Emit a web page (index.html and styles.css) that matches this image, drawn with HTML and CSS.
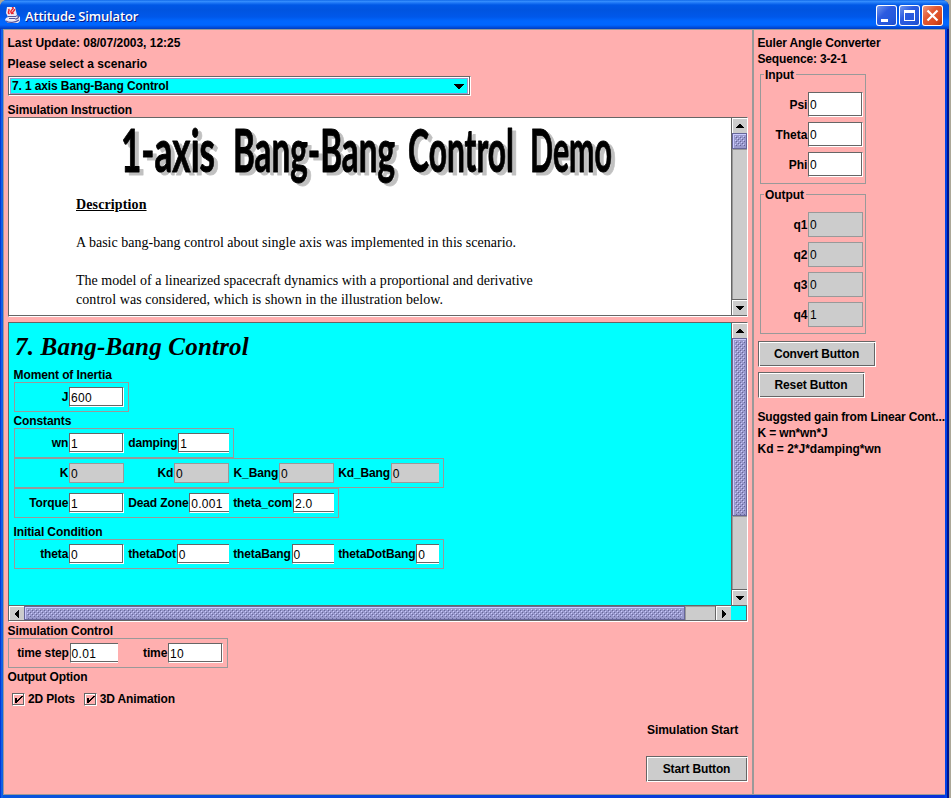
FILE: index.html
```html
<!DOCTYPE html>
<html lang="en">
<head>
<meta charset="utf-8">
<title>Attitude Simulator</title>
<link rel="stylesheet" href="styles.css">
</head>
<body>
<div class="window">
  <header class="titlebar">
    <svg class="java" width="16" height="17" viewBox="0 0 16 17">
      <path d="M2 0h8l1 4 1 4 3 2v4l-2 2H3l-3-3 1-2 2-1-2-4z" fill="#eceaf6"/>
      <path d="M7 0c4 2-4 3 0 7M9.500 2c1 2-4 3-1 5M3.500 2c2 2-2 3 1 5" fill="none" stroke="#e8262e" stroke-width="1.500"/>
      <path d="M3 9.500h8M4 11.500h6M11 9c4-1 3 3-1 3M1 14c3 2 9 2 13-1" fill="none" stroke="#55559c" stroke-width="1.200"/>
    </svg>
    <h1 class="caption">Attitude Simulator</h1>
    <div class="winbtns">
      <span class="winbtn"><svg width="21" height="21"><path d="M5 14h7v3H5z" fill="#fff"/></svg></span>
      <span class="winbtn"><svg width="21" height="21"><path d="M5 5h11v11H5zM6 8v7h9V8z" fill="#fff" fill-rule="evenodd"/></svg></span>
      <span class="winbtn close"><svg width="21" height="21"><path d="M5.500 5.500l10 10M15.500 5.500l-10 10" stroke="#fff" stroke-width="2.200"/></svg></span>
    </div>
  </header>
  <div class="client">
    <main class="left">
      <div class="label update">Last Update: 08/07/2003, 12:25</div>
      <div class="label">Please select a scenario</div>
      <div class="combo"><div class="combo-in"><span>7. 1 axis Bang-Bang Control</span><svg width="10" height="5"><path d="M0 0h10v1H9v1H8v1H7v1H6v1H4V4H3V3H2V2H1V1H0z"/></svg></div></div>
      <div class="label instr">Simulation Instruction</div>
      <div class="pane pane-doc">
        <div class="doc">
          <svg class="banner" width="520" height="72" viewBox="111 118 520 72">
            <g class="word">
              <text transform="translate(121 172) scale(1 1.400)" textLength="94" lengthAdjust="spacingAndGlyphs">1-axis</text>
              <text transform="translate(233 172) scale(1 1.400)" textLength="162" lengthAdjust="spacingAndGlyphs">Bang-Bang</text>
              <text transform="translate(408 172) scale(1 1.400)" textLength="106" lengthAdjust="spacingAndGlyphs">Control</text>
              <text transform="translate(530 172) scale(1 1.400)" textLength="82" lengthAdjust="spacingAndGlyphs">Demo</text>
            </g>
          </svg>
          <h2 class="desc">Description</h2>
          <p>A basic bang-bang control about single axis was implemented in this scenario.</p>
          <p>The model of a linearized spacecraft dynamics with a proportional and derivative<br><span>control was considered, which is shown in the illustration below.</span></p>
        </div>
        <div class="vbar">
          <span class="sbtn"><svg width="8" height="4"><path d="M3 0h2v1h1v1h1v1h1v1H0V3h1V2h1V1h1z"/></svg></span>
          <span class="thumb short"></span>
          <span class="track"></span>
          <span class="sbtn"><svg width="8" height="4"><path d="M0 0h8v1H7v1H6v1H5v1H3V3H2V2H1V1H0z"/></svg></span>
        </div>
      </div>
      <div class="pane pane-ctl">
        <div class="ctl">
          <h2 class="ctl-title">7. Bang-Bang Control</h2>
          <div class="label moment">Moment of Inertia</div>
          <div class="row"><div class="cell"><span>J</span><i class="field">600</i></div></div>
          <div class="label sep">Constants</div>
          <div class="row"><div class="cell"><span>wn</span><i class="field">1</i></div><div class="cell"><span>damping</span><i class="field">1</i></div></div>
          <div class="row"><div class="cell"><span>K</span><i class="field off">0</i></div><div class="cell"><span>Kd</span><i class="field off">0</i></div><div class="cell"><span>K_Bang</span><i class="field off">0</i></div><div class="cell"><span>Kd_Bang</span><i class="field off">0</i></div></div>
          <div class="row"><div class="cell"><span>Torque</span><i class="field">1</i></div><div class="cell"><span>Dead Zone</span><i class="field">0.001</i></div><div class="cell"><span>theta_com</span><i class="field">2.0</i></div></div>
          <div class="label init">Initial Condition</div>
          <div class="row"><div class="cell"><span>theta</span><i class="field">0</i></div><div class="cell"><span>thetaDot</span><i class="field">0</i></div><div class="cell"><span>thetaBang</span><i class="field">0</i></div><div class="cell"><span>thetaDotBang</span><i class="field">0</i></div></div>
        </div>
        <div class="vbar">
          <span class="sbtn"><svg width="8" height="4"><path d="M3 0h2v1h1v1h1v1h1v1H0V3h1V2h1V1h1z"/></svg></span>
          <span class="thumb tall"></span>
          <span class="track"></span>
          <span class="sbtn"><svg width="8" height="4"><path d="M0 0h8v1H7v1H6v1H5v1H3V3H2V2H1V1H0z"/></svg></span>
        </div>
        <div class="hbar">
          <span class="sbtn"><svg width="4" height="8"><path d="M4 0v8H3V7H2V6H1V5H0V3h1V2h1V1h1V0z"/></svg></span>
          <span class="thumb wide"></span>
          <span class="track"></span>
          <span class="sbtn"><svg width="4" height="8"><path d="M0 0v8h1V7h1V6h1V5h1V3H3V2H2V1H1V0z"/></svg></span>
        </div>
      </div>
      <div class="label simc">Simulation Control</div>
      <div class="row"><div class="cell"><span>time step</span><i class="field">0.01</i></div><div class="cell"><span>time</span><i class="field">10</i></div></div>
      <div class="label sep">Output Option</div>
      <div class="checks">
        <span class="check"><b class="box"><svg width="8" height="7"><path d="M0 2h2v2h1V3h1V2h1V1h1V0h2v1H7v1H6v1H5v1H4v1H3v1H2v1H0z"/></svg></b>2D Plots</span>
        <span class="check"><b class="box"><svg width="8" height="7"><path d="M0 2h2v2h1V3h1V2h1V1h1V0h2v1H7v1H6v1H5v1H4v1H3v1H2v1H0z"/></svg></b>3D Animation</span>
      </div>
      <div class="start">
        <div class="label">Simulation Start</div>
        <div class="btn startbtn">Start Button</div>
      </div>
    </main>
    <aside class="rightcol">
      <div class="label">Euler Angle Converter</div>
      <div class="label">Sequence: 3-2-1</div>
      <section class="group">
        <h3>Input</h3>
        <div class="pair"><span>Psi</span><i class="field">0</i></div>
        <div class="pair"><span>Theta</span><i class="field">0</i></div>
        <div class="pair"><span>Phi</span><i class="field">0</i></div>
      </section>
      <section class="group out">
        <h3>Output</h3>
        <div class="pair"><span>q1</span><i class="field off">0</i></div>
        <div class="pair"><span>q2</span><i class="field off">0</i></div>
        <div class="pair"><span>q3</span><i class="field off">0</i></div>
        <div class="pair"><span>q4</span><i class="field off">1</i></div>
      </section>
      <div class="btn convert">Convert Button</div>
      <div class="btn reset">Reset Button</div>
      <div class="label gain">Suggsted gain from Linear Cont...</div>
      <div class="label">K = wn*wn*J</div>
      <div class="label formula">Kd = 2*J*damping*wn</div>
    </aside>
  </div>
</div>
</body>
</html>
```
FILE: styles.css
```css
* { box-sizing: border-box; margin: 0; padding: 0; }
body { width: 951px; height: 798px; overflow: hidden; background: #aca899; font: bold 12px/16px "Liberation Sans", Arial, sans-serif; color: #000; }
svg { display: block; flex: none; }

/* Window frame and title bar */
.window { width: 949px; height: 798px; padding: 0 4px 3px 3px; border-radius: 7px 7px 0 0; background: linear-gradient(90deg, #0019cf 0, #0855dd 1px, #166aee 2px, #0855dd 3px, #0831d9 944px, #0042e8 945px, #0042e8 947px, #00138c 947px); display: flex; flex-direction: column; }
.titlebar { height: 29px; margin: 0 -4px 0 -3px; padding: 1px 6px 0 5px; border-radius: 7px 7px 0 0; display: flex; align-items: center; background: linear-gradient(#0058e0 0, #3a93ff 1px, #1c75f5 3px, #0058e6 5px, #0054e0 10px, #0058ea 17px, #0066fe 21px, #0066ff 25px, #0050e0 27px, #003dc0 29px); }
.caption { flex: 1; margin-left: 4px; padding-top: 2px; font: 600 13px/18px "Open Sans", sans-serif; letter-spacing: -.17px; color: #fff; text-shadow: 1px 1px #0a1883; }
.winbtns { display: flex; gap: 2px; padding-top: 1px; }
.winbtn { width: 21px; height: 21px; border-radius: 3px; box-shadow: inset 0 0 0 1px #fff; background: linear-gradient(135deg, #7b9ff0, #2c5be0 40%, #2458dc 70%, #1a4bc8); }
.close { background: linear-gradient(135deg, #f0a088, #e25a34 40%, #dc4c22 70%, #b03008); }

/* Two columns */
.client { flex: 1; display: flex; background: #ffafaf; border: 1px solid #999; border-right: 0; }
.left { width: 748px; padding: 5px 4px 0; }
.rightcol { width: 194px; border-left: 2px solid #999; padding: 5px 0 0 4px; white-space: nowrap; }
.label { height: 16px; margin-left: -.5px; letter-spacing: -.1px; white-space: nowrap; }
.update { margin-bottom: 5px; letter-spacing: -.02px; }
.update + .label { letter-spacing: .07px; }
.instr { margin-top: 6px; height: 15px; }

.combo { width: 463px; height: 20px; margin-top: 4px; border: 1px solid #666; border-right-color: #fff; border-bottom-color: #fff; padding: 1px 2px 2px 1px; background: #fff; box-shadow: inset -1px -1px #666; }
.combo-in { height: 16px; border: 1px solid #99c; background: #0ff; display: flex; justify-content: space-between; align-items: center; padding: 0 3px 0 1px; line-height: 14px; letter-spacing: -.12px; }

/* Scroll panes */
.pane { width: 740px; border: 1px solid #666; border-right-color: #fff; border-bottom-color: #fff; box-shadow: inset -1px -1px #666; display: grid; grid-template-columns: 722px 15px; padding: 0 1px 1px 0; }
.pane-doc { height: 200px; background: #fff; }
.pane-ctl { margin-top: 5px; height: 300px; background: #0ff; grid-template-rows: 283px 14px; }
.doc { height: 197px; padding-left: 67px; overflow: hidden; font: 14px/19px "Liberation Serif", serif; letter-spacing: .02px; }
.banner { margin-left: 35px; }
.word { font: bold 42px Lato, sans-serif; fill: #000; stroke: #000; stroke-width: .7px; stroke-linejoin: round; filter: drop-shadow(4px 3px 0 #c0c0c0); }
.desc { font: bold 14px/19px "Liberation Serif", serif; letter-spacing: .12px; text-decoration: underline; margin: 5px 0 19px; }
.doc p { margin-bottom: 19px; }
.doc p span { letter-spacing: .07px; }
.vbar { display: flex; flex-direction: column; border-left: 1px solid #666; width: 16px; }
.pane-ctl .vbar { border-bottom: 1px solid #666; }
.hbar { grid-column: 1; height: 15px; display: flex; box-shadow: 0 -1px #666; }
.sbtn { width: 15px; height: 15px; flex: none; background: #ccc; border: 1px solid #fff; border-right: 0; border-bottom: 0; display: flex; align-items: center; justify-content: center; }
.thumb { padding: 2px; border: 1px solid #669; box-shadow: inset 1px 1px #ccf; background-color: #99c; background-image: conic-gradient(from 270deg at 1px 1px, #ccf 90deg, transparent 0), conic-gradient(from 270deg at 1px 1px, #ccf 90deg, transparent 0), conic-gradient(from 270deg at 1px 1px, #669 90deg, transparent 0), conic-gradient(from 270deg at 1px 1px, #669 90deg, #99c 0); background-size: 4px 4px; background-position: 0 0, 2px 2px, 1px 1px, 3px 3px; background-clip: content-box, content-box, content-box, border-box; }
.short { height: 16px; }
.tall { height: 178px; }
.wide { width: 661px; }
.track { flex: 1; background: #ccc; box-shadow: inset 1px 1px #999; border-bottom: 1px solid #666; }
.hbar .sbtn, .hbar .thumb, .hbar .track { height: 14px; }
.hbar .track { border-bottom: 0; border-right: 1px solid #666; }

/* Control form */
.ctl { padding: 9px 0 0 5px; }
.ctl-title { font: italic bold 25px/30px "Liberation Serif", serif; letter-spacing: .2px; height: 35px; margin-left: 1px; white-space: nowrap; }
.moment { height: 15px; }
.row { width: max-content; height: 30px; padding: 4px; border: 1px solid #999; display: flex; }
.cell { width: 105px; padding-left: 4.200px; display: flex; overflow: hidden; line-height: 20px; letter-spacing: -.12px; }
.cell span { flex: 1 0 auto; text-align: right; padding-right: .8px; }
.field { flex: 0 0 55px; height: 20px; padding: 1px 0 0 1px; background: #fff; border: 1px solid #666; border-right-color: #fff; border-bottom-color: #fff; box-shadow: inset -1px -1px #666; font: normal 12px/18px "Liberation Sans", Arial, sans-serif; letter-spacing: .3px; }
.off { background: #ccc; border-color: #999; box-shadow: none; }
.sep { margin-top: 1px; height: 15px; }
.init { margin-top: 6px; height: 15px; }
.simc { margin-top: 1px; height: 15px; }
.checks { display: flex; gap: 9px; height: 24px; margin: 3px 0 0 4px; align-items: center; letter-spacing: -.15px; }
.check { display: flex; align-items: center; gap: 3px; }
.box { width: 13px; height: 13px; border: 1px solid #666; border-right-color: #fff; border-bottom-color: #fff; box-shadow: inset -1px -1px #666, inset 1px 1px #fff; padding: 2px 0 0 2px; }
.start { width: 102px; margin: 11px 0 0 638px; }
.start .label { margin: 0 0 18px 1px; letter-spacing: -.05px; }
.btn { height: 26px; background: #ccc; border: 1px solid #666; border-right-color: #fff; border-bottom-color: #fff; box-shadow: inset 1px 1px #fff, inset -1px -1px #666; text-align: center; line-height: 25px; padding-right: 1px; letter-spacing: -.15px; }
.startbtn { width: 102px; }

/* Converter column */
.group { width: 106px; height: 110px; margin: 7px 0 0 2px; border: 1px solid #999; padding-right: 2px; }
.group h3 { width: max-content; height: 16px; margin: -8px 0 9px 3px; padding: 0 2px 0 1px; background: #ffafaf; font: inherit; letter-spacing: -.06px; }
.out { height: 140px; margin-top: 10px; }
.pair { display: flex; height: 25px; margin-bottom: 5px; line-height: 26px; justify-content: flex-end; }
.pair span { padding-right: .6px; }
.pair .field { height: 25px; line-height: 23px; }
.rightcol .label { letter-spacing: -.16px; }
.rightcol .formula { letter-spacing: 0; }
.convert { width: 118px; margin-top: 7px; }
.reset { width: 107px; margin: 5px 0 11px; }
```
